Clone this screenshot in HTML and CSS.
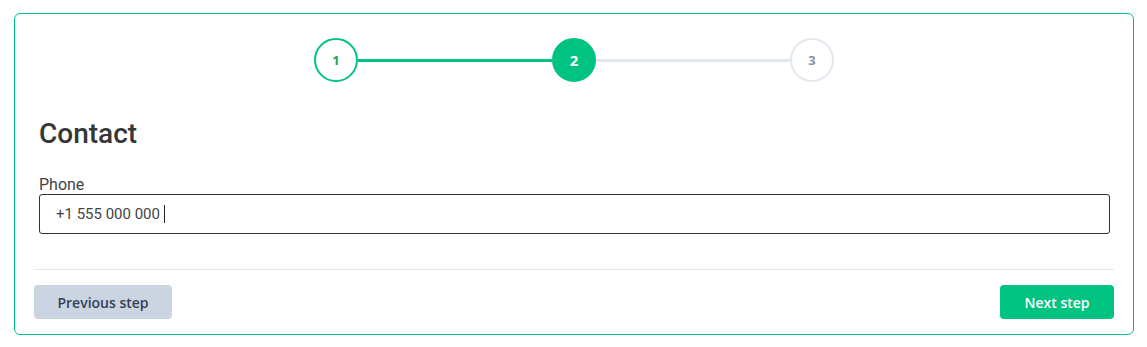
FILE: index.html
```html
<!DOCTYPE html>
<html lang="en">
<head>
  <meta charset="UTF-8" />
  <title>Contact</title>
  <link rel="stylesheet" href="styles.css">
</head>
<body>

  <div class="wizard">
    <div class="steps">
      <div class="step done">1</div>
      <div class="step-line done"></div>
      <div class="step active">2</div>
      <div class="step-line"></div>
      <div class="step">3</div>
    </div>

    <div class="wizard-body">
      <h2>Contact</h2>
      <label class="field-label" for="phone">Phone</label>
      <div class="field">
        <span class="field-value">+1 555 000 000</span><span class="caret"></span>
      </div>
    </div>

    <div class="wizard-footer">
      <button class="btn btn-prev">Previous step</button>
      <button class="btn btn-next">Next step</button>
    </div>
  </div>

</body>
</html>
```

FILE: styles.css
```css
body {
  margin: 13px 13px 0 14px;
  font-family: Roboto, Arial, sans-serif;
  background: #ffffff;
}

.wizard {
  border: 1px solid #00c281;
  border-radius: 6px;
  padding: 24px 19px 14px;
  height: 322px;
  box-sizing: border-box;
}

.steps {
  display: flex;
  align-items: center;
  justify-content: center;
}

.step {
  width: 44px;
  height: 44px;
  box-sizing: border-box;
  border-radius: 50%;
  border: 2px solid #e2e8f0;
  display: flex;
  align-items: center;
  justify-content: center;
  font-family: 'Open Sans', sans-serif;
  font-weight: 700;
  font-size: 13px;
  color: #8391a7;
}

.step.done {
  border-color: #00c281;
  color: #27a35a;
}

.step.active {
  border-color: #00c281;
  background: #00c281;
  color: #ffffff;
  font-size: 15px;
}

.step-line {
  width: 194px;
  height: 3px;
  background: #e2e8f0;
}

.step-line.done {
  background: #00c281;
}

.wizard-body {
  padding: 0 4px 0 5px;
}

.wizard-body h2 {
  margin: 37px 0 0;
  font-size: 28px;
  font-weight: 500;
  line-height: 30px;
  color: #363636;
}

.field-label {
  display: block;
  margin-top: 27px;
  font-size: 16px;
  line-height: 18px;
  color: #444444;
}

.field {
  height: 40px;
  box-sizing: border-box;
  border: 1px solid #333333;
  border-radius: 3px;
  display: flex;
  align-items: center;
  padding: 0 16px;
  font-size: 15px;
  color: #444444;
}

.caret {
  display: inline-block;
  width: 1px;
  height: 18px;
  margin-left: 4px;
  background: #222222;
}

.wizard-footer {
  margin-top: 35px;
  border-top: 1px solid #e5e7eb;
  padding-top: 15px;
  display: flex;
  justify-content: space-between;
}

.btn {
  border: none;
  border-radius: 4px;
  height: 34px;
  font-family: 'Open Sans', sans-serif;
  font-weight: 600;
  font-size: 14px;
  cursor: pointer;
}

.btn-prev {
  width: 138px;
  background: #cbd5e1;
  color: #334155;
}

.btn-next {
  width: 114px;
  background: #00c281;
  color: #ffffff;
}
```
